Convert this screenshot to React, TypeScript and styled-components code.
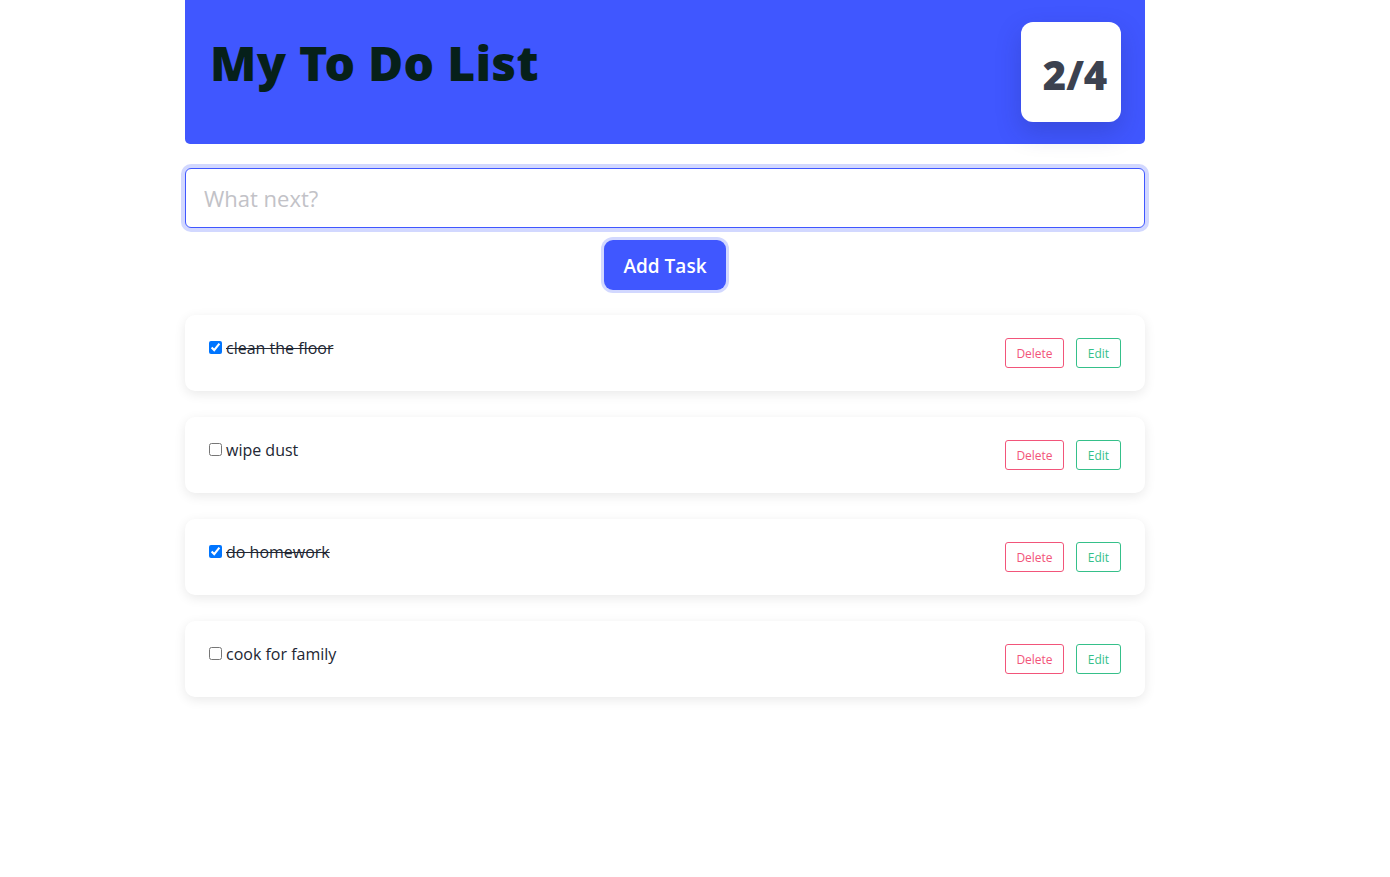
import React from "react";
import styled, { createGlobalStyle } from "styled-components";

const Global = createGlobalStyle`
  body { margin: 0; background: #fff; font-family: "Open Sans", "Noto Sans", sans-serif; }
`;

const Page = styled.div`
  width: 960px;
  margin-left: 185px;
  padding-bottom: 60px;
  display: flex;
  flex-direction: column;
`;

const Header = styled.header`
  height: 144px;
  background: #4057ff;
  border-radius: 0 0 5px 5px;
  display: flex;
  justify-content: space-between;
  align-items: flex-start;
  padding: 0 24px 0 25px;
  box-sizing: border-box;
`;

const Title = styled.h1`
  margin: 33px 0 0;
  font-family: "Noto Sans", sans-serif;
  font-weight: 900;
  font-size: 48px;
  line-height: 60px;
  color: #06201a;
  letter-spacing: 0.3px;
`;

const Badge = styled.div`
  margin-top: 22px;
  width: 100px;
  height: 100px;
  box-sizing: border-box;
  padding: 4px 0 0 8px;
  border-radius: 12px;
  background: #fff;
  display: flex;
  align-items: center;
  justify-content: center;
  font-family: "Noto Sans", sans-serif;
  font-weight: 900;
  font-size: 40px;
  color: #3c4250;
  box-shadow: 0 10px 25px rgba(30, 40, 120, 0.25);
`;

const Form = styled.form`
  margin-top: 24px;
  display: flex;
  flex-direction: column;
  align-items: center;
  gap: 12px;
`;

const Input = styled.input`
  width: 100%;
  height: 60px;
  box-sizing: border-box;
  border: 1px solid #4057ff;
  border-radius: 6px;
  box-shadow: 0 0 0 4px #d2d8ff;
  padding: 0 18px;
  font-family: "Open Sans", sans-serif;
  font-size: 22px;
  color: #333;
  outline: none;
  &::placeholder { color: #c2c2c7; }
`;

const AddButton = styled.button`
  width: 122px;
  height: 50px;
  padding: 2px 0 0;
  border: none;
  border-radius: 9px;
  background: #4057ff;
  color: #fff;
  font-family: "Open Sans", sans-serif;
  font-weight: 600;
  font-size: 19px;
  box-shadow: 0 0 0 3px #d2d8ff;
  cursor: pointer;
`;

const List = styled.ul`
  list-style: none;
  margin: 25px 0 0;
  padding: 0;
  display: flex;
  flex-direction: column;
  gap: 26px;
`;

const Card = styled.li`
  height: 76px;
  box-sizing: border-box;
  background: #fff;
  border-radius: 10px;
  box-shadow: 0 3px 12px rgba(0, 0, 0, 0.09);
  padding: 0 24px;
  display: flex;
  align-items: center;
  justify-content: space-between;
`;

const Label = styled.label<{ $done: boolean }>`
  display: flex;
  align-items: center;
  gap: 4px;
  margin-top: -11px;
  font-family: "Open Sans", sans-serif;
  font-size: 16px;
  color: #222733;
  text-decoration: ${(p) => (p.$done ? "line-through" : "none")};
`;

const Check = styled.input`
  margin: 0;
  width: 13px;
  height: 13px;
`;

const Actions = styled.div`
  display: flex;
  gap: 12px;
`;

const SmallButton = styled.button<{ $color: string; $width: number }>`
  height: 30px;
  width: ${(p) => p.$width}px;
  padding: 0;
  background: #fff;
  border: 1px solid ${(p) => p.$color};
  color: ${(p) => p.$color};
  border-radius: 3px;
  font-family: "Open Sans", sans-serif;
  font-size: 12px;
  cursor: pointer;
`;

const tasks = [
  { name: "clean the floor", done: true },
  { name: "wipe dust", done: false },
  { name: "do homework", done: true },
  { name: "cook for family", done: false },
];

export default function App() {
  return (
    <Page>
      <Global />
      <Header>
        <Title>My To Do List</Title>
        <Badge>2/4</Badge>
      </Header>
      <Form onSubmit={(e) => e.preventDefault()}>
        <Input placeholder="What next?" />
        <AddButton type="submit">Add Task</AddButton>
      </Form>
      <List>
        {tasks.map((t) => (
          <Card key={t.name}>
            <Label $done={t.done}>
              <Check type="checkbox" defaultChecked={t.done} />
              {t.name}
            </Label>
            <Actions>
              <SmallButton $color="#f2557a" $width={59}>Delete</SmallButton>
              <SmallButton $color="#35c08a" $width={45}>Edit</SmallButton>
            </Actions>
          </Card>
        ))}
      </List>
    </Page>
  );
}
